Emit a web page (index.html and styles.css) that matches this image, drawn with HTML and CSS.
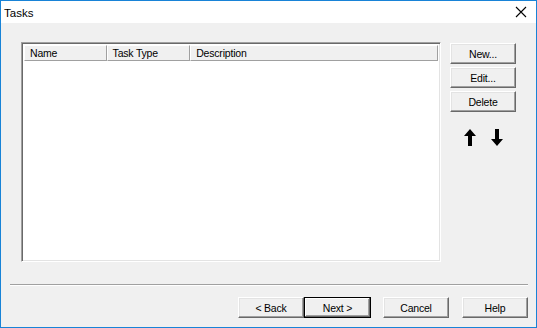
FILE: index.html
```html
<!DOCTYPE html>
<html lang="en">
<head>
    <meta charset="UTF-8">
    <title>Tasks</title>
    <link rel="stylesheet" href="styles.css">
</head>
<body>
    <div class="window">
        <div class="titlebar">
            <span class="title">Tasks</span>
            <svg class="close" width="12" height="12" viewBox="0 0 12 12">
                <path d="M1 1 L11 11 M11 1 L1 11" stroke="#000" stroke-width="1.1" fill="none"/>
            </svg>
        </div>
        <div class="content">
            <div class="main">
                <div class="listbox">
                    <div class="header">
                        <div class="col col-name">Name</div>
                        <div class="col col-type">Task Type</div>
                        <div class="col col-desc">Description</div>
                    </div>
                    <div class="rows"></div>
                </div>
                <div class="side">
                    <button class="btn">New...</button>
                    <button class="btn">Edit...</button>
                    <button class="btn">Delete</button>
                    <div class="arrows">
                        <svg width="12" height="17" viewBox="0 0 12 17">
                            <path d="M6 0 L12 7 L8 7 L8 17 L4 17 L4 7 L0 7 Z" fill="#000"/>
                        </svg>
                        <svg width="12" height="17" viewBox="0 0 12 17">
                            <path d="M6 17 L12 10 L8 10 L8 0 L4 0 L4 10 L0 10 Z" fill="#000"/>
                        </svg>
                    </div>
                </div>
            </div>
            <div class="sep"></div>
            <div class="footer">
                <button class="btn">&lt; Back</button>
                <button class="btn default">Next &gt;</button>
                <button class="btn gap">Cancel</button>
                <button class="btn gap">Help</button>
            </div>
        </div>
    </div>
</body>
</html>
```
FILE: styles.css
```css
body {
    margin: 0;
    font-family: "Liberation Sans", Arial, sans-serif;
    font-size: 10.5px;
    letter-spacing: -0.2px;
    color: #000;
}

.window {
    width: 537px;
    height: 328px;
    box-sizing: border-box;
    border: 1px solid #1883d7;
    background-color: #f0f0f0;
    display: flex;
    flex-direction: column;
}

.titlebar {
    height: 22px;
    background-color: #fff;
    display: flex;
    align-items: center;
    justify-content: space-between;
    padding: 0 9px 0 3px;
}

.title {
    font-size: 11.5px;
    letter-spacing: 0;
    margin-top: 1px;
}

.content {
    flex: 1;
    display: flex;
    flex-direction: column;
    padding: 19px 8px 0 8px;
}

.main {
    display: flex;
    gap: 9px;
    padding-left: 12px;
}

.listbox {
    width: 420px;
    height: 220px;
    box-sizing: border-box;
    background-color: #fff;
    border: 1px solid;
    border-color: #a0a0a0 #fff #fff #a0a0a0;
    box-shadow: inset 1px 1px #696969, inset -1px -1px #e3e3e3;
    padding: 2px;
}

.header {
    display: flex;
    height: 16px;
}

.col {
    box-sizing: border-box;
    background-color: #f0f0f0;
    border: 1px solid;
    border-color: #fff #a0a0a0 #a0a0a0 #fff;
    padding: 1px 0 0 5px;
    line-height: 13px;
}

.col-name {
    width: 83px;
}

.col-type {
    width: 84px;
}

.col-desc {
    width: 249px;
}

.side {
    display: flex;
    flex-direction: column;
    gap: 3px;
    padding-top: 1px;
}

.btn {
    font-family: "Liberation Sans", Arial, sans-serif;
    font-size: 10.5px;
    letter-spacing: -0.2px;
    width: 66px;
    height: 21px;
    padding: 0;
    background-color: #f0f0f0;
    border: 1px solid;
    border-color: #fff #696969 #696969 #fff;
    box-shadow: inset -1px -1px #a0a0a0, inset 1px 1px #e3e3e3;
    color: #000;
}

.side .btn {
    height: 21px;
}

.btn.default {
    border-color: #000;
    box-shadow: inset -1px -1px #696969, inset 1px 1px #fff, inset -2px -2px #a0a0a0;
    width: 67px;
}

.arrows {
    display: flex;
    justify-content: center;
    gap: 15px;
    margin-top: 14px;
}

.sep {
    margin-top: 22px;
    margin-left: 1px;
    height: 1px;
    background-color: #a0a0a0;
    border-bottom: 1px solid #fff;
}

.footer {
    display: flex;
    justify-content: flex-end;
    margin-top: 11px;
}

.btn.gap {
    margin-left: 12px;
}

.btn.gap:last-child {
    margin-left: 13px;
}
```
